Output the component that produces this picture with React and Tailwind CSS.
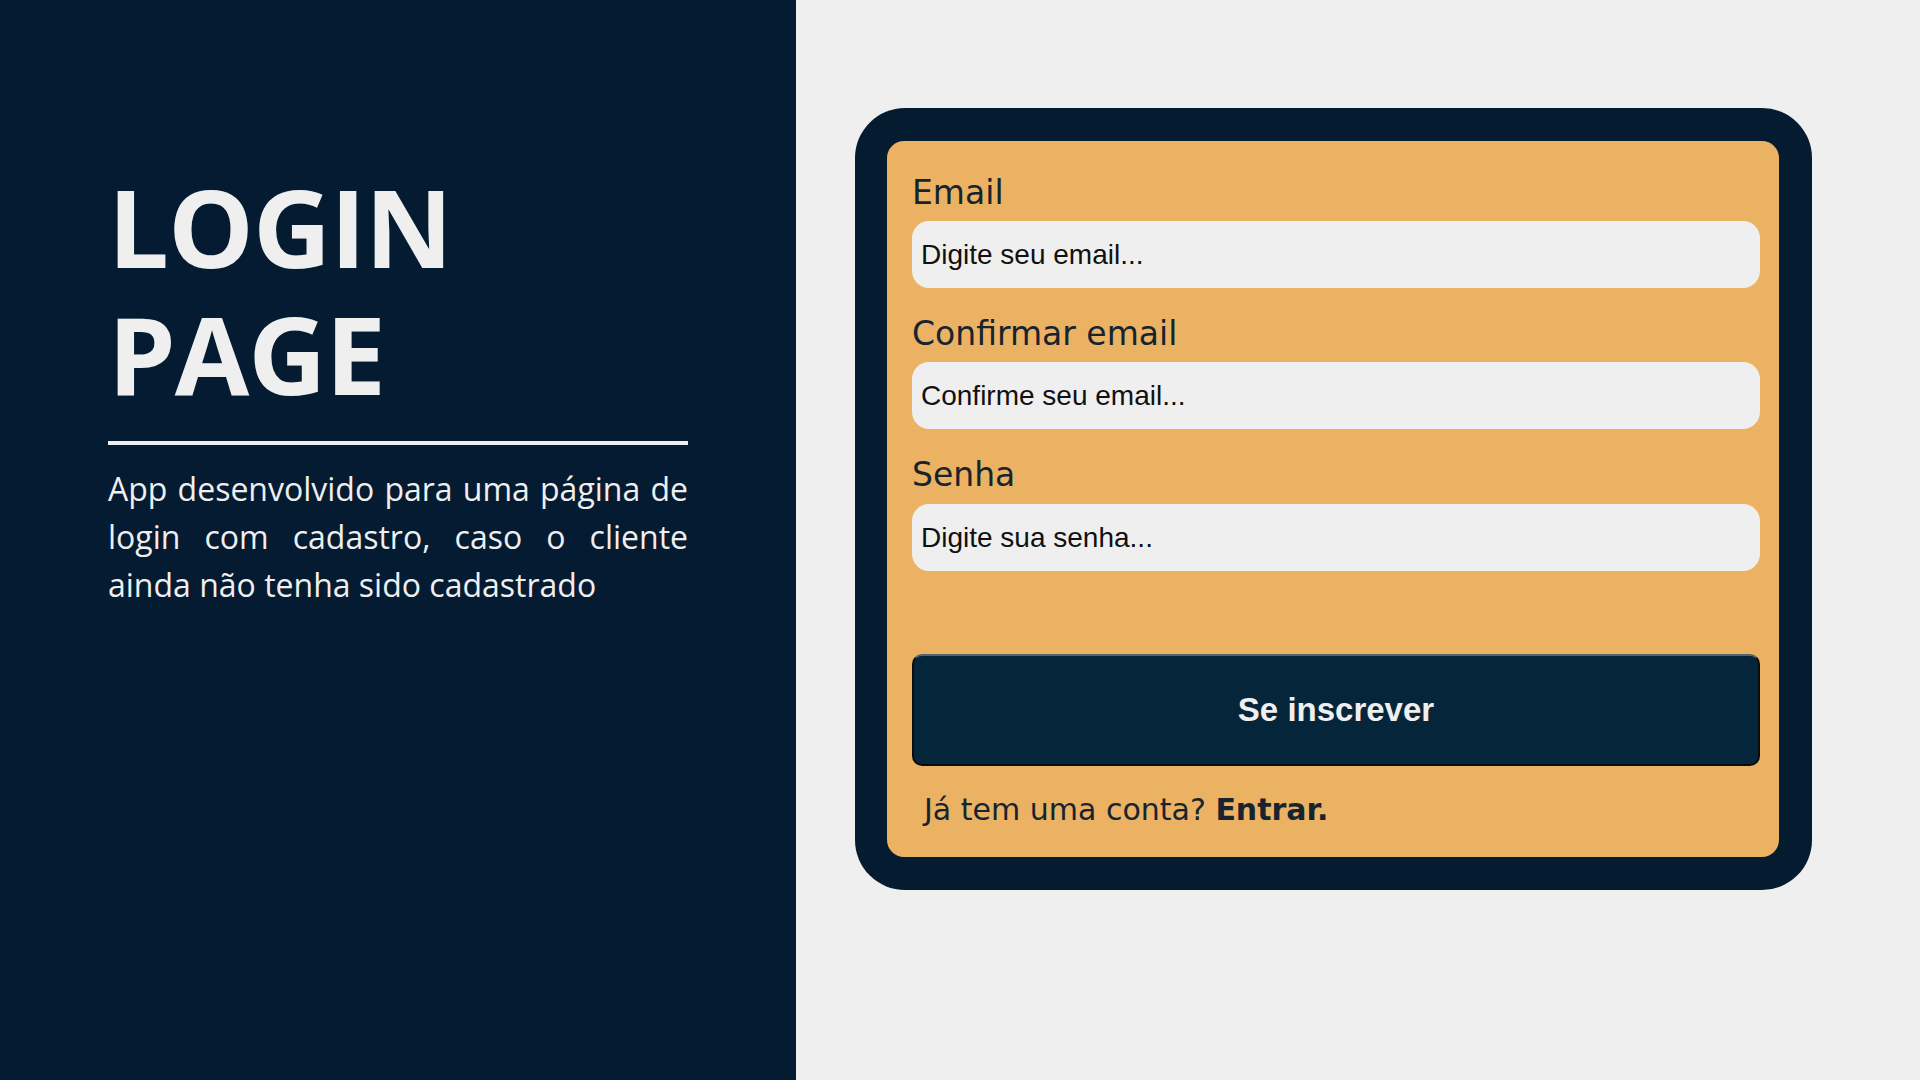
export default function App() {
  return (
    <div className="flex h-screen w-full bg-[#efefef]">
      <div className="w-[796px] shrink-0 bg-[#041b31] pl-[108px] pr-[108px] pt-[163px] font-['Open_Sans',sans-serif] text-[#efefef]">
        <h1 className="text-[108px] font-bold leading-[127px] tracking-[-1px]">
          LOGIN
          <br />
          PAGE
        </h1>
        <div className="mt-[24px] h-[4px] w-[580px] bg-[#efefef]" />
        <p className="mt-[20px] w-[580px] text-justify text-[32px] leading-[48px]">
          App desenvolvido para uma página de login com cadastro, caso o cliente ainda não tenha sido cadastrado
        </p>
      </div>

      <div className="flex-1 pl-[59px] pt-[108px]">
        <div className="w-[957px] rounded-[50px] bg-[#041b30] p-[33px] pl-[32px]">
          <form
            className="flex flex-col rounded-[17px] bg-[#ebb263] pl-[25px] pr-[19px] pt-[33px] pb-[30px] font-['DejaVu_Sans',sans-serif]"
            onSubmit={(e) => e.preventDefault()}
          >
            <label className="text-[33px] leading-[38px] text-[#17242f]">Email</label>
            <input
              className="mt-[9px] h-[67px] rounded-[17px] bg-[#efefef] px-[9px] font-['Liberation_Sans',sans-serif] text-[28px] text-[#111] placeholder:text-[#111] outline-none"
              placeholder="Digite seu email..."
            />

            <label className="mt-[27px] text-[33px] leading-[38px] text-[#17242f]">Confirmar email</label>
            <input
              className="mt-[9px] h-[67px] rounded-[17px] bg-[#efefef] px-[9px] font-['Liberation_Sans',sans-serif] text-[28px] text-[#111] placeholder:text-[#111] outline-none"
              placeholder="Confirme seu email..."
            />

            <label className="mt-[27px] text-[33px] leading-[38px] text-[#17242f]">Senha</label>
            <input
              type="password"
              className="mt-[10px] h-[67px] rounded-[17px] bg-[#efefef] px-[9px] font-['Liberation_Sans',sans-serif] text-[28px] text-[#111] placeholder:text-[#111] outline-none"
              placeholder="Digite sua senha..."
            />

            <button
              type="submit"
              className="mt-[83px] h-[112px] rounded-[10px] border-2 border-[#0b0b0b] border-t-[#55636c] bg-[#05263a] font-['Liberation_Sans',sans-serif] text-[33px] font-bold text-[#efefef]"
            >
              Se inscrever
            </button>

            <p className="ml-[12px] mt-[26px] text-[30px] leading-[35px] text-[#17242f]">
              Já tem uma conta? <span className="font-bold">Entrar.</span>
            </p>
          </form>
        </div>
      </div>
    </div>
  );
}
